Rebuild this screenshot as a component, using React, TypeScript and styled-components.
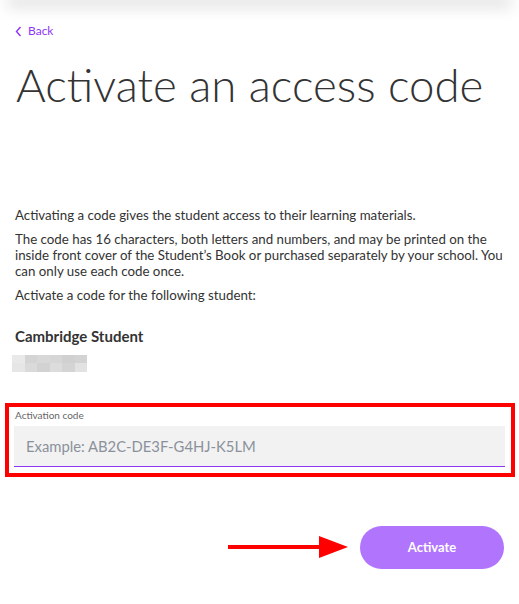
import React from "react";
import styled, { createGlobalStyle } from "styled-components";

const Global = createGlobalStyle`
  html, body { margin: 0; padding: 0; background: #fff; }
  body { font-family: "Lato", "Noto Sans", sans-serif; color: #333; overflow: hidden; }
  * { box-sizing: border-box; }
`;

const HeaderShadow = styled.div`
  height: 1px;
  margin: -1px 12px 0;
  background: #fff;
  box-shadow: 0 2px 16px 5px rgba(0, 0, 0, 0.14);
`;

const Page = styled.main`
  padding: 0 15px;
`;

const BackLink = styled.a`
  display: inline-flex;
  align-items: center;
  gap: 6px;
  margin-top: 23px;
  color: #8c35f7;
  font-size: 12px;
  line-height: 16px;
  text-decoration: none;
  cursor: pointer;
`;

const Title = styled.h1`
  margin: 17px 0 0 1px;
  font-size: 45.6px;
  line-height: 56px;
  font-weight: 300;
  color: #333;
`;

const Intro = styled.div`
  margin-top: 94px;
  display: flex;
  flex-direction: column;
  gap: 8px;
`;

const Para = styled.p`
  margin: 0;
  font-size: 13.3px;
  line-height: 16px;
  color: #333;
`;

const StudentName = styled.h2`
  margin: 23px 0 0;
  font-size: 15px;
  line-height: 20px;
  font-weight: 700;
  color: #333;
`;

const Blurred = styled.div`
  margin: 9px 0 0 -3px;
  width: 75px;
  height: 17px;
  display: grid;
  grid-template-columns: repeat(6, 1fr);
  grid-template-rows: 1fr 1fr;
`;

const Cell = styled.span<{ $g: string }>`
  background: ${(p) => p.$g};
`;

const Annotation = styled.div`
  margin: 31px -11px 0 -10px;
  border: 4px solid #ff0000;
  padding: 2px 6px 6px 5px;
`;

const FieldLabel = styled.label`
  display: block;
  padding-left: 1px;
  font-size: 10px;
  line-height: 12px;
  color: #666;
`;

const Input = styled.input`
  display: block;
  width: 100%;
  height: 41px;
  margin-top: 5px;
  border: none;
  border-bottom: 1px solid #8c35f7;
  background: #f2f2f2;
  padding: 0 12px;
  font-family: inherit;
  font-size: 14.8px;
  color: #333;
  outline: none;
  &::placeholder { color: #8a919b; }
`;

const ActionRow = styled.div`
  margin-top: 49px;
  display: flex;
  justify-content: flex-end;
  align-items: center;
  gap: 12px;
`;

const Arrow = styled.svg`
  display: block;
`;

const ActivateButton = styled.button`
  width: 144px;
  height: 43px;
  border: none;
  border-radius: 22px;
  background: #b174fd;
  color: #fff;
  font-family: inherit;
  font-size: 13px;
  font-weight: 700;
  cursor: pointer;
`;

const greys = [
  "#e9e9e9", "#d4d4d4", "#d8d8d8", "#d6d6d6", "#d0d0d0", "#d3d3d3",
  "#e6e6e6", "#dadada", "#d2d2d2", "#dcdcdc", "#d4d4d4", "#e2e2e2",
];

export default function App() {
  return (
    <>
      <Global />
      <HeaderShadow />
      <Page>
        <BackLink>
          <svg width="7" height="11" viewBox="0 0 7 11">
            <path d="M5.5 1 L1.5 5.5 L5.5 10" fill="none" stroke="#8c35f7" strokeWidth="1.4" />
          </svg>
          Back
        </BackLink>
        <Title>Activate an access code</Title>
        <Intro>
          <Para>Activating a code gives the student access to their learning materials.</Para>
          <Para>
            The code has 16 characters, both letters and numbers, and may be printed on the
            inside front cover of the Student’s Book or purchased separately by your school. You
            can only use each code once.
          </Para>
          <Para>Activate a code for the following student:</Para>
        </Intro>
        <StudentName>Cambridge Student</StudentName>
        <Blurred>
          {greys.map((g, i) => (
            <Cell key={i} $g={g} />
          ))}
        </Blurred>
        <Annotation>
          <FieldLabel htmlFor="code">Activation code</FieldLabel>
          <Input id="code" placeholder="Example: AB2C-DE3F-G4HJ-K5LM" />
        </Annotation>
        <ActionRow>
          <Arrow width="120" height="22" viewBox="0 0 120 22">
            <rect x="0" y="9" width="92" height="4" fill="#ff0000" />
            <polygon points="91,0 120,11 91,22" fill="#ff0000" />
          </Arrow>
          <ActivateButton>Activate</ActivateButton>
        </ActionRow>
      </Page>
    </>
  );
}
